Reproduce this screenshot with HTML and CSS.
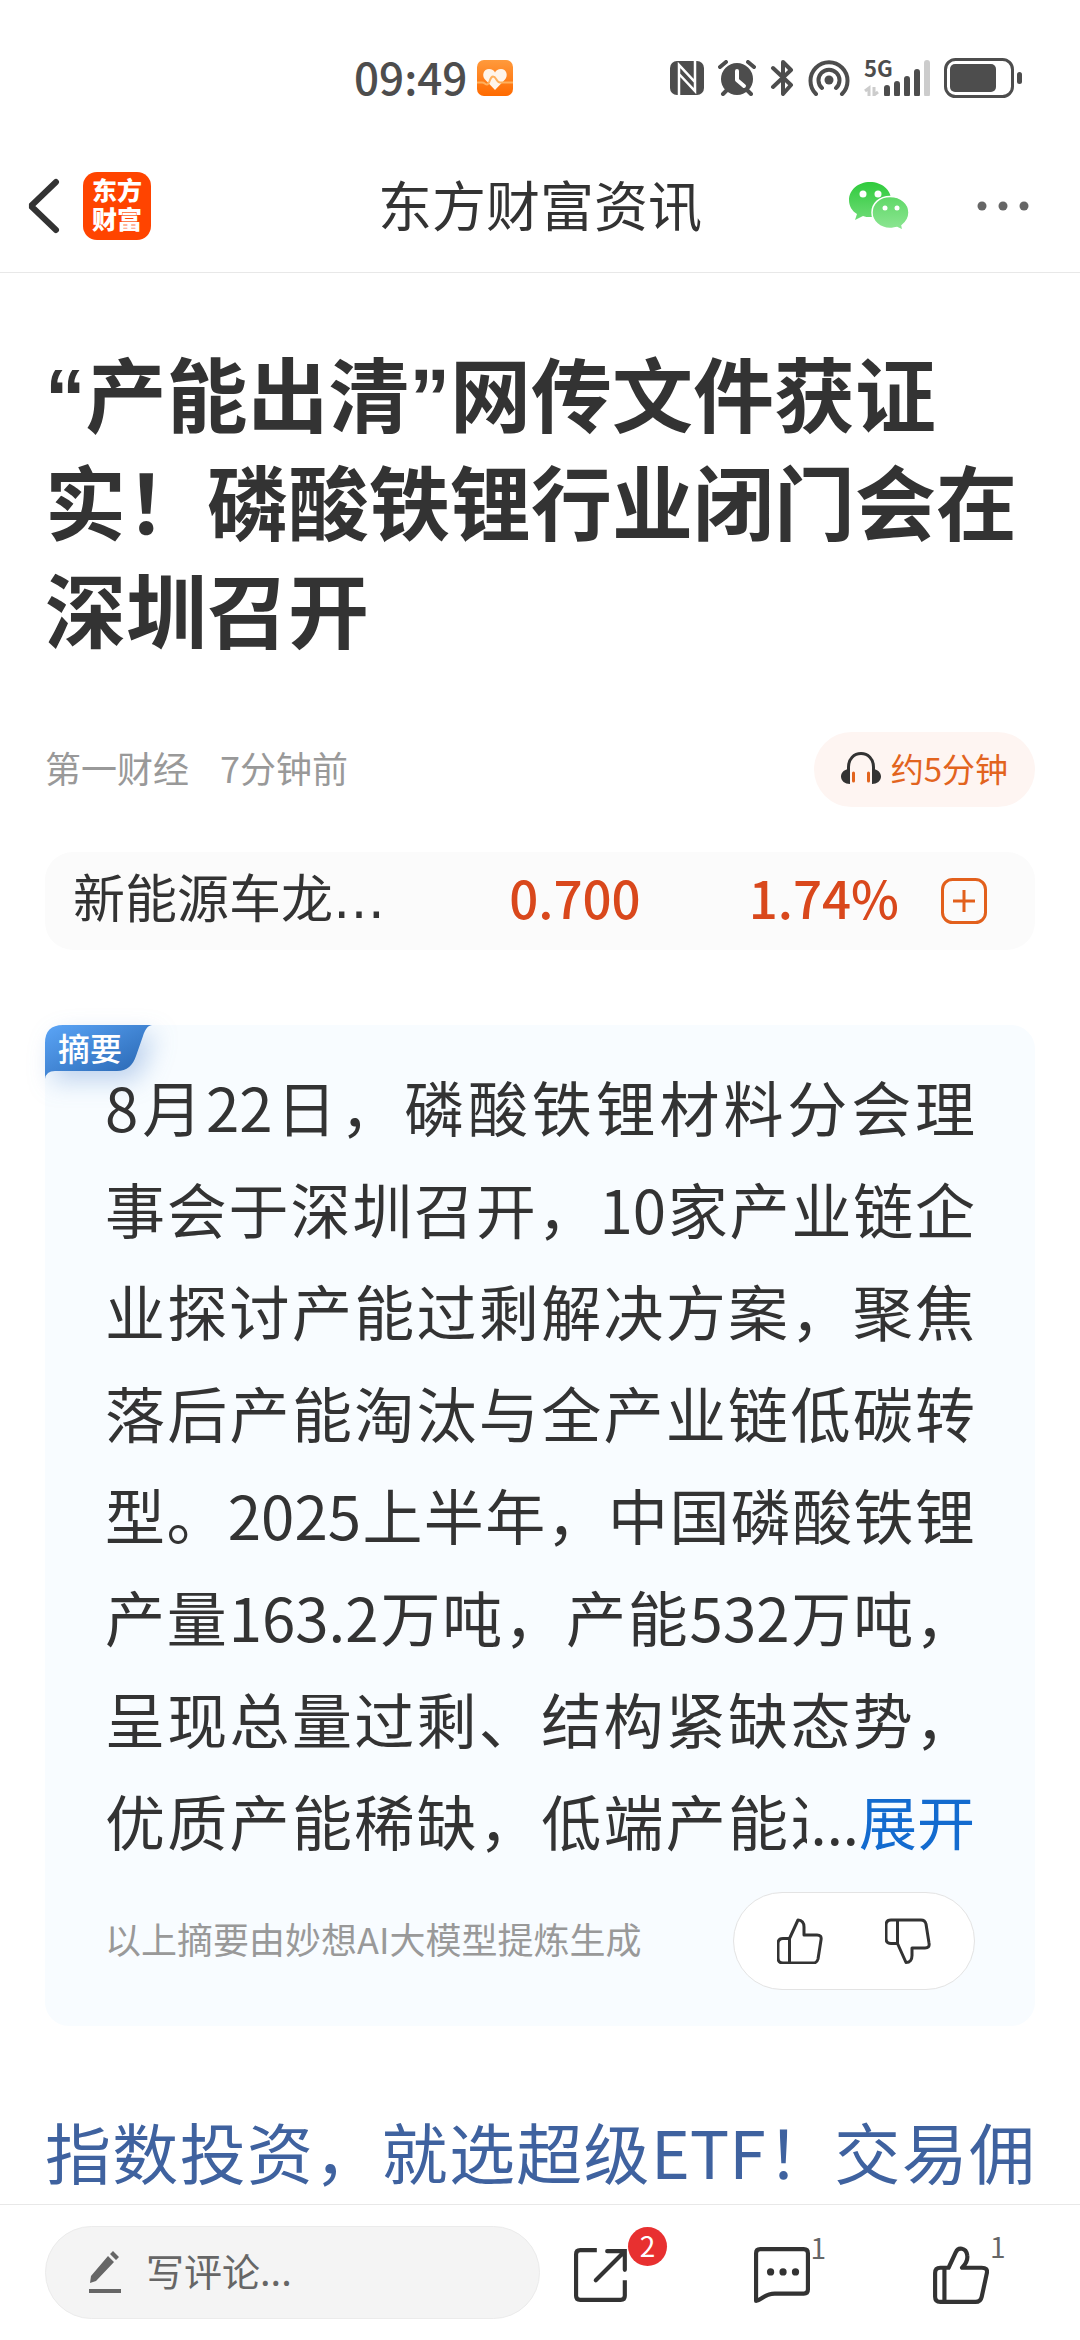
FILE: index.html
```html
<!DOCTYPE html>
<html lang="zh-CN">
<head>
    <meta charset="UTF-8">
    <meta name="viewport" content="width=device-width, initial-scale=1.0">
    <title>东方财富资讯</title>
    <link rel="stylesheet" href="styles.css">
</head>
<body>
    <div class="status-bar">
        <span class="status-time">09:49</span>
        <svg class="status-app" width="36" height="36" viewBox="0 0 36 36">
            <defs>
                <linearGradient id="heartBg" x1="0" y1="0" x2="0" y2="1">
                    <stop offset="0" stop-color="#ff9a3c"/>
                    <stop offset="1" stop-color="#ff6a00"/>
                </linearGradient>
            </defs>
            <rect width="36" height="36" rx="7" fill="url(#heartBg)"/>
            <path d="M18 30L8 19.500C4.500 15.500 6.500 9 12 9c3 0 5 1.500 6 3.500C19 10.500 21 9 24 9c5.500 0 7.500 6.500 4 10.500z" fill="#fff5ea"/>
            <path d="M0 22.500h5c3 0 3 2 5 2 3 0 2.500-8 6-8s3 6 7 6h13" fill="none" stroke="#ffb05c" stroke-width="2"/>
        </svg>
        <div class="status-icons">
            <svg width="34" height="34" viewBox="0 0 34 34">
                <rect width="34" height="34" rx="7" fill="#4d4d4d"/>
                <path d="M9 34V4l16 17V11M25 0v30L9 13" fill="none" stroke="#fff" stroke-width="2.500"/>
            </svg>
            <svg width="38" height="36" viewBox="0 0 38 36">
                <circle cx="19" cy="19" r="16" fill="#4d4d4d"/>
                <path d="M2 7l6-5M36 7l-6-5M5 34l5-5M33 34l-5-5" stroke="#4d4d4d" stroke-width="4" stroke-linecap="round"/>
                <path d="M19 11v9l7 6" fill="none" stroke="#fff" stroke-width="4" stroke-linecap="round" stroke-linejoin="round"/>
            </svg>
            <svg width="24" height="36" viewBox="0 0 24 36">
                <path d="M3 8l18 17-8 9V2l8 8L3 27" fill="none" stroke="#4d4d4d" stroke-width="4" stroke-linecap="round" stroke-linejoin="round"/>
            </svg>
            <svg width="42" height="36" viewBox="0 0 42 36">
                <circle cx="21" cy="20" r="4.500" fill="#4d4d4d"/>
                <path d="M8 34a18.500 18.500 0 1 1 26 0M14 28a10.500 10.500 0 1 1 14 0" fill="none" stroke="#4d4d4d" stroke-width="4" stroke-linecap="round"/>
            </svg>
            <div class="network">
                <span class="network-type">5G</span>
                <svg width="66" height="36" viewBox="0 0 66 36">
                    <path d="M5 36V28l-4 3M10 27v8l4-3" fill="none" stroke="#ccc" stroke-width="3"/>
                    <path d="M23 28v6M33 24v10M43 19v15M53 12v22" stroke="#4d4d4d" stroke-width="6" stroke-linecap="round"/>
                    <path d="M63 3v31" stroke="#ccc" stroke-width="6" stroke-linecap="round"/>
                </svg>
            </div>
            <svg width="78" height="40" viewBox="0 0 78 40">
                <rect x="1.500" y="1.500" width="67" height="37" rx="10" fill="none" stroke="#4d4d4d" stroke-width="3"/>
                <rect x="6" y="6" width="46" height="28" rx="5" fill="#4d4d4d"/>
                <rect x="73" y="14" width="5" height="12" rx="2.500" fill="#4d4d4d"/>
            </svg>
        </div>
    </div>

    <header class="nav-bar">
        <div class="nav-left">
            <button class="icon-button" aria-label="返回">
                <svg width="34" height="56" viewBox="0 0 34 56">
                    <path d="M29 4L4 28l25 24" fill="none" stroke="#333" stroke-width="6" stroke-linecap="round" stroke-linejoin="bevel"/>
                </svg>
            </button>
            <a href="#" class="app-logo">东方<br>财富</a>
        </div>
        <h2 class="nav-title">东方财富资讯</h2>
        <div class="nav-right">
            <button class="icon-button" aria-label="分享到微信">
                <svg width="62" height="50" viewBox="0 0 62 50">
                    <defs>
                        <linearGradient id="bubbleBack" x1="0" y1="0" x2="0" y2="1">
                            <stop offset="0" stop-color="#2fcb3c"/>
                            <stop offset="1" stop-color="#6edb76"/>
                        </linearGradient>
                        <linearGradient id="bubbleFront" x1="0" y1="0" x2="0" y2="1">
                            <stop offset="0" stop-color="#5fd867"/>
                            <stop offset="1" stop-color="#8ee694"/>
                        </linearGradient>
                    </defs>
                    <path d="M22 1C10 1 1 9 1 19c0 6 3 11 8 14l-2 6 8-4c2 1 5 1 7 1 12 0 21-8 21-17.500S34 1 22 1z" fill="url(#bubbleBack)"/>
                    <path d="M42 15.500c-10.500 0-18 7-18 16s8 16 18 16c3 0 5-1 7-1l6 3-1-5c4-3 7-8 7-13 0-9-8-16-19-16z" fill="url(#bubbleFront)" stroke="#fff" stroke-width="1.500"/>
                    <g fill="#fff">
                        <circle cx="15" cy="13" r="3.500"/>
                        <circle cx="30" cy="13" r="3.500"/>
                        <circle cx="37" cy="27" r="2.500"/>
                        <circle cx="49" cy="27" r="2.500"/>
                    </g>
                </svg>
            </button>
            <button class="icon-button" aria-label="更多">
                <svg width="52" height="10" viewBox="0 0 52 10" fill="#666">
                    <circle cx="5" cy="5" r="4.500"/>
                    <circle cx="26" cy="5" r="4.500"/>
                    <circle cx="47" cy="5" r="4.500"/>
                </svg>
            </button>
        </div>
    </header>

    <main class="article">
        <h1 class="article-title">“产能出清”网传文件获证实！磷酸铁锂行业闭门会在深圳召开</h1>

        <div class="article-meta">
            <span>第一财经</span>
            <span>7分钟前</span>
            <button class="listen">
                <svg width="40" height="32" viewBox="0 0 40 32">
                    <path d="M7.500 20V15C7.500 7 13 1.500 20 1.500S32.500 7 32.500 15v5" fill="none" stroke="#333" stroke-width="3"/>
                    <path d="M9 17v15C4 32 0 29 0 24.500S4 17 9 17zM31 17v15c5 0 9-3 9-7.500S36 17 31 17z" fill="#333"/>
                    <path d="M12.500 21v8M27.500 21v8" stroke="#e2641e" stroke-width="3" stroke-linecap="round"/>
                </svg>
                约5分钟
            </button>
        </div>

        <div class="stock">
            <a href="#" class="stock-name">新能源车龙…</a>
            <span class="stock-price">0.700</span>
            <span class="stock-change">1.74%</span>
            <button class="icon-button" aria-label="加自选">
                <svg width="46" height="46" viewBox="0 0 46 46" fill="none" stroke="#e2601c" stroke-width="3">
                    <rect x="1.500" y="1.500" width="43" height="43" rx="10"/>
                    <path d="M12 23h22M23 12v22"/>
                </svg>
            </button>
        </div>

        <section class="summary">
            <div class="summary-tag">
                <svg width="107" height="54" viewBox="0 0 107 54">
                    <defs>
                        <linearGradient id="tagBg" x1="0" y1="0" x2="1" y2="1">
                            <stop offset="0" stop-color="#5ba5f7"/>
                            <stop offset="1" stop-color="#2461ac"/>
                        </linearGradient>
                    </defs>
                    <path d="M0 54V18Q0 0 18 0h89c-5 1-7 5-9 11l-7 20c-3 9-9 15-19 15H10Q1 46 0 54z" fill="url(#tagBg)"/>
                </svg>
                <span>摘要</span>
            </div>
            <div class="summary-body">
                <p class="summary-text">8月22日，磷酸铁锂材料分会理事会于深圳召开，10家产业链企业探讨产能过剩解决方案，聚焦落后产能淘汰与全产业链低碳转型。2025上半年，中国磷酸铁锂产量163.2万吨，产能532万吨，呈现总量过剩、结构紧缺态势，优质产能稀缺，低端产能过剩。</p>
                <div class="summary-more">...<a href="#">展开</a></div>
            </div>
            <div class="summary-footer">
                <span>以上摘要由妙想AI大模型提炼生成</span>
                <div class="vote">
                    <button class="icon-button" aria-label="有用">
                        <svg width="46" height="46" viewBox="0 0 46 46" fill="none" stroke="#333" stroke-width="3" stroke-linejoin="round">
                            <path d="M12.500 20.500L21 2c4 0 6 3 6 7v8h13q5 0 4 5l-3 19q-1 4-5 4H6q-5 0-5-5V25.500q0-5 5-5zM12.500 20.500V45"/>
                        </svg>
                    </button>
                    <button class="icon-button" aria-label="没用">
                        <svg width="46" height="46" viewBox="0 0 46 46" fill="none" stroke="#333" stroke-width="3" stroke-linejoin="round">
                            <path d="M12.500 25.500L21 44.500c4 0 6-3 6-7V30h13q5 0 4-5L41 6q-1-4-5-4H6Q1 2 1 7v13.500q0 5 5 5zM12.500 25.500V2"/>
                        </svg>
                    </button>
                </div>
            </div>
        </section>

        <a href="#" class="promo">指数投资，就选超级ETF！交易佣</a>
    </main>

    <footer class="bottom-bar">
        <label class="comment-box">
            <svg width="32" height="43" viewBox="0 0 32 43" fill="#666">
                <path d="M19 5l6 6L7 30l-6 2 1-7zM21 3l3-3 6 6-3 3zM0 38h32v4H0z"/>
            </svg>
            <input type="text" placeholder="写评论..." aria-label="写评论">
        </label>
        <div class="actions">
            <button class="icon-button" aria-label="转发">
                <svg width="56" height="56" viewBox="0 0 54 54" fill="none" stroke="#333" stroke-width="4">
                    <path d="M22 3H6Q2 3 2 7v40q0 4 4 4h39q4 0 4-4V32"/>
                    <path d="M32 4h17v18M48 5L21 32" stroke-linecap="round"/>
                </svg>
                <span class="badge">2</span>
            </button>
            <button class="icon-button" aria-label="评论">
                <svg width="56" height="56" viewBox="0 0 54 54" fill="none" stroke="#333" stroke-width="4" stroke-linejoin="round">
                    <path d="M2 52V6q0-4 4-4h42q4 0 4 4v35q0 4-4 4H20C10 45 6 52 2 52z"/>
                    <g fill="#333" stroke="none">
                        <circle cx="16" cy="24" r="3.500"/>
                        <circle cx="28" cy="24" r="3.500"/>
                        <circle cx="40" cy="24" r="3.500"/>
                    </g>
                </svg>
                <span class="count">1</span>
            </button>
            <button class="icon-button" aria-label="点赞">
                <svg width="56" height="58" viewBox="0 0 54 56" fill="none" stroke="#333" stroke-width="4" stroke-linejoin="round">
                    <path d="M2 26q0-5 5-5h8L22 6c2-5 10-5 11 3q1 6-5 12h19q6 0 5 5l-5 23q-1 5-6 5H7q-5 0-5-5zM11 21v33"/>
                </svg>
                <span class="count">1</span>
            </button>
        </div>
    </footer>
</body>
</html>
```
FILE: styles.css
```css
* {
    box-sizing: border-box;
    margin: 0;
    padding: 0;
}

body {
    display: flex;
    flex-direction: column;
    height: 100vh;
    background-color: #fff;
    color: #333;
    font-family: "Noto Sans CJK SC", sans-serif;
}

a {
    color: inherit;
    text-decoration: none;
}

button {
    border: none;
    background: none;
    font-family: inherit;
    cursor: pointer;
}

svg {
    display: block;
    flex-shrink: 0;
}

.icon-button {
    position: relative;
    display: flex;
    align-items: center;
}

/* status bar */
.status-bar {
    display: flex;
    align-items: center;
    height: 140px;
    padding: 16px 58px 0 354px;
    color: #4d4d4d;
}

.status-time {
    padding-bottom: 4px;
    font-size: 44px;
    font-weight: 500;
    line-height: 60px;
}

.status-app {
    margin-left: 10px;
}

.status-icons {
    display: flex;
    align-items: center;
    gap: 14px;
    margin-left: auto;
}

.network {
    position: relative;
}

.network-type {
    position: absolute;
    top: -5px;
    left: 0;
    font-size: 22px;
    font-weight: 700;
    line-height: 24px;
}

/* nav bar */
.nav-bar {
    display: grid;
    grid-template-columns: 1fr auto 1fr;
    align-items: center;
    height: 133px;
    padding: 0 51px 0 27px;
    border-bottom: 1px solid #e8e8e8;
}

.nav-left,
.nav-right {
    display: flex;
    align-items: center;
    gap: 22px;
}

.nav-right {
    gap: 67px;
    justify-content: flex-end;
}

.app-logo {
    width: 68px;
    height: 68px;
    padding-top: 3px;
    border-radius: 14px;
    background-color: #ff4400;
    color: #fff;
    font-size: 25px;
    font-weight: 900;
    line-height: 29px;
    text-align: center;
}

.nav-title {
    padding: 0 0 4px 24px;
    font-size: 54px;
    font-weight: 400;
    line-height: 80px;
}

/* article */
.article {
    flex: 1;
    min-height: 0;
    overflow: hidden;
    padding: 71px 45px 0;
}

.article-title {
    font-family: "Liberation Sans", "Noto Sans CJK SC", sans-serif;
    font-size: 81px;
    font-weight: 700;
    line-height: 108px;
}

.article-meta {
    display: flex;
    align-items: center;
    gap: 31px;
    margin-top: 64px;
    color: #999;
    font-size: 36px;
}

.article-meta span {
    padding-bottom: 6px;
}

.listen {
    display: flex;
    align-items: center;
    gap: 10px;
    height: 75px;
    margin-left: auto;
    padding: 0 27px 4px;
    border-radius: 38px;
    background-color: #fef5f2;
    color: #e2641e;
    font-size: 33px;
}

.stock {
    display: flex;
    align-items: center;
    height: 98px;
    margin-top: 45px;
    padding: 0 48px 0 28px;
    border-radius: 28px;
    background-color: #fbfbfb;
    font-size: 52px;
    line-height: 76px;
}

.stock-name {
    flex: 1;
    padding-bottom: 2px;
    font-family: "DejaVu Sans", "Noto Sans CJK SC", sans-serif;
}

.stock-price,
.stock-change {
    padding-bottom: 8px;
    color: #d9481c;
    font-size: 51px;
    font-weight: 500;
}

.stock-change {
    margin: 0 42px 0 108px;
}

/* summary card */
.summary {
    position: relative;
    margin-top: 75px;
    padding: 30px 60px 36px;
    border-radius: 24px;
    background-color: #f8fcff;
}

.summary-tag {
    position: absolute;
    top: 0;
    left: 0;
    color: #fff;
    font-size: 32px;
    font-weight: 500;
    line-height: 44px;
}

.summary-tag svg {
    filter: drop-shadow(8px 10px 12px rgba(60, 120, 200, 0.3));
}

.summary-tag span {
    position: absolute;
    top: 0;
    left: 13px;
    white-space: nowrap;
}

.summary-body {
    position: relative;
}

.summary-text {
    font-size: 60px;
    line-height: 102px;
    text-align: justify;
    text-align-last: justify;
}

.summary-more {
    position: absolute;
    right: 0;
    bottom: 0;
    padding-left: 4px;
    background-color: #f8fcff;
    font-size: 58px;
    line-height: 102px;
}

.summary-more a {
    color: #136bcf;
}

.summary-footer {
    display: flex;
    align-items: center;
    justify-content: space-between;
    margin-top: 21px;
    color: #999;
    font-size: 36px;
}

.summary-footer span {
    padding-bottom: 6px;
}

.vote {
    display: flex;
    justify-content: space-between;
    width: 242px;
    height: 98px;
    padding: 0 43px;
    border: 1px solid #e3e3e3;
    border-radius: 49px;
    background-color: #fff;
}

.promo {
    display: block;
    margin-top: 70px;
    color: #3f629f;
    font-size: 66px;
    line-height: 108px;
    text-align: justify;
    text-align-last: justify;
}

/* bottom bar */
.bottom-bar {
    display: flex;
    align-items: center;
    height: 136px;
    padding: 0 91px 0 45px;
    border-top: 1px solid #e8e8e8;
    background-color: #fff;
}

.comment-box {
    display: flex;
    flex: 1;
    align-items: center;
    gap: 25px;
    min-width: 0;
    height: 93px;
    padding: 0 43px;
    border: 1px solid #ebebeb;
    border-radius: 47px;
    background-color: #f4f4f4;
}

.comment-box input {
    flex: 1;
    min-width: 0;
    padding-bottom: 6px;
    border: none;
    outline: none;
    background: none;
    font-family: inherit;
    font-size: 38px;
}

.comment-box input::placeholder {
    color: #666;
}

.actions {
    display: flex;
    flex-shrink: 0;
    align-items: center;
    justify-content: space-between;
    width: 415px;
    margin-left: 34px;
    padding-top: 4px;
}

.badge {
    position: absolute;
    top: -20px;
    left: 54px;
    width: 39px;
    height: 39px;
    border-radius: 50%;
    background-color: #e83030;
    color: #fff;
    font-size: 28px;
    line-height: 37px;
    text-align: center;
}

.count {
    position: absolute;
    top: -18px;
    left: 57px;
    color: #666;
    font-size: 28px;
    line-height: 36px;
}
```
